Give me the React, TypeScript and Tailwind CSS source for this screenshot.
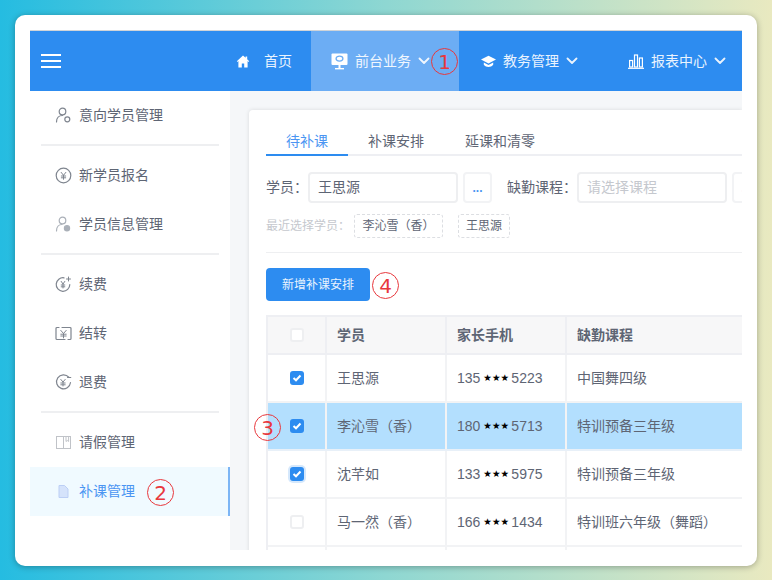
import React from "react";

const font = { fontFamily: '"Liberation Sans","Noto Sans CJK SC",sans-serif' };

function Chevron() {
  return (
    <svg width="12" height="8" viewBox="0 0 12 8" fill="none" stroke="#fff" strokeWidth="1.8" strokeLinecap="round" strokeLinejoin="round" className="shrink-0 opacity-90">
      <path d="M1.500 1.500 6 6l4.500-4.500" />
    </svg>
  );
}

function HomeIcon() {
  return (
    <svg width="14" height="13" viewBox="0 0 14 13" fill="#fff">
      <path d="M7 .5 .8 6.200l.7.7L2.400 6v6.400h3.400V8.600h2.400v3.800h3.400V6l.9.9.7-.7-2-1.900V1.400h-1.600v1.400z" />
    </svg>
  );
}

function DeskIcon() {
  return (
    <svg width="17" height="17" viewBox="0 0 17 17">
      <rect x="0.500" y="0.500" width="16" height="11.500" rx="1" fill="#fff" />
      <ellipse cx="8.500" cy="5.600" rx="3.400" ry="2.500" fill="none" stroke="#6cadf4" strokeWidth="1.300" />
      <rect x="7.500" y="12" width="2" height="3" fill="#fff" />
      <rect x="4" y="15" width="9" height="1.400" fill="#fff" />
    </svg>
  );
}

function CapIcon() {
  return (
    <svg width="15" height="13" viewBox="0 0 15 13" fill="#fff">
      <path d="M7.500.8 0 4.600l7.500 3.800L15 4.600z" />
      <path d="M2.800 7.600v2.200c1.200 1.400 3 2.200 4.700 2.200s3.500-.8 4.700-2.200V7.600L7.500 10z" />
    </svg>
  );
}

function BarsIcon() {
  return (
    <svg width="16" height="15" viewBox="0 0 16 15" fill="none" stroke="#fff" strokeWidth="1.200">
      <rect x="1.600" y="6.500" width="3" height="6.500" />
      <rect x="6.500" y="1" width="3" height="12" />
      <rect x="11.400" y="4" width="3" height="9" />
      <path d="M0 14.300h16" />
    </svg>
  );
}

const g = { fill: "none", stroke: "#7f858f", strokeWidth: 1.2, strokeLinecap: "round" as const };

function SideIcon({ n }: { n: number }) {
  return (
    <svg width="17" height="17" viewBox="0 0 17 17" className="shrink-0">
      {n === 0 && (
        <g {...g}>
          <circle cx="7.500" cy="4.500" r="3.300" />
          <path d="M1.500 15c0-4 2.500-6.500 6-6.500" />
          <circle cx="12.300" cy="12.300" r="2.500" />
        </g>
      )}
      {n === 1 && (
        <g {...g}>
          <circle cx="8.500" cy="8.500" r="7.300" />
          <path d="M6.200 5.400 8.500 8.300l2.300-2.900M6.300 9h4.400M6.300 10.800h4.400M8.500 8.300v4" strokeWidth="1" />
        </g>
      )}
      {n === 2 && (
        <g {...g} stroke="#aab0b8">
          <circle cx="7.500" cy="4.500" r="3.300" />
          <path d="M1.500 15c0-4 2.500-6.500 5.500-6.500" />
          <circle cx="12" cy="12.300" r="2.600" fill="#aab0b8" />
        </g>
      )}
      {n === 3 && (
        <g {...g}>
          <path d="M14.800 8.500a6.800 6.800 0 1 1-5.800-6.700" />
          <path d="M13.500 1v4M11.500 3h4" strokeWidth="1" />
          <path d="M6.200 5.400 8 8l1.800-2.600M6.200 9h3.600M6.200 10.800h3.600M8 8v4" strokeWidth="1" />
        </g>
      )}
      {n === 4 && (
        <g {...g}>
          <path d="M4 2.500H2a1 1 0 0 0-1 1v10a1 1 0 0 0 1 1h8M13 14.500h2a1 1 0 0 0 1-1v-10a1 1 0 0 0-1-1H7" />
          <path d="M5.800 5.400 8.500 8.500l2.700-3.100M5.800 9.200h5.400M5.800 11h5.400M8.500 8.500v4.400" strokeWidth="1" />
        </g>
      )}
      {n === 5 && (
        <g {...g}>
          <path d="M13.800 3.200a7 7 0 1 0 1.700 5.300" />
          <path d="M12.500 3.500h3.300" strokeWidth="1" />
          <path d="M5.800 5.400 8 8l2.200-2.600M5.800 9h4.400M5.800 10.800h4.400M8 8v4" strokeWidth="1" />
        </g>
      )}
      {n === 6 && (
        <g fill="none" stroke="#c0c3c8" strokeWidth="1">
          <rect x="1.500" y="2.500" width="14" height="12" />
          <path d="M8.500 2.500v12M11 2.500v5l1.300-1 1.300 1v-5" />
        </g>
      )}
      {n === 7 && (
        <path d="M4 2.500h5.500L13 6v8.500H4z" fill="#d5e3fb" stroke="#bccff5" strokeWidth="1" />
      )}
    </svg>
  );
}

function SideItem({ n, text, active }: { n: number; text: string; active?: boolean }) {
  return (
    <div className={active ? "flex h-[49px] items-center gap-[7px] border-r-2 border-[#7cb5f5] bg-[#f0faff] pl-[25px] text-[14px] text-[#4b95f2]" : "flex h-[49px] items-center gap-[7px] pl-[25px] text-[14px] text-[#5e6574]"}>
      <SideIcon n={n} />
      <span>{text}</span>
    </div>
  );
}

function SideDivider() {
  return <div className="mx-[11px] mt-[4px] mb-[5px] h-[2px] bg-[#eeeff1]" />;
}

function NavItem({ icon, text, active, inset }: { icon: React.ReactNode; text: string; active?: boolean; inset: string }) {
  return (
    <div className={active ? "flex h-full w-[148px] shrink-0 items-center bg-[#6cadf4] pl-[20px] text-[14px] text-white/90" : "flex h-full w-[148px] shrink-0 items-center pl-[20px] text-[14px] text-white/90"}>
      <span className={"flex w-[24px] shrink-0 items-center " + inset}>{icon}</span>
      <span>{text}</span>
      <span className="ml-[7px] flex"><Chevron /></span>
    </div>
  );
}

function Check({ on, glow }: { on?: boolean; glow?: boolean }) {
  if (!on) return <span className="block h-[14px] w-[14px] rounded-[3px] border-2 border-[#eeeff1] bg-white" />;
  return (
    <span className={glow ? "flex h-[14px] w-[14px] items-center justify-center rounded-[3px] bg-[#2d8cf0] shadow-[0_0_0_2px_rgba(45,140,240,0.2)]" : "flex h-[14px] w-[14px] items-center justify-center rounded-[3px] bg-[#2d8cf0]"}>
      <svg width="10" height="8" viewBox="0 0 10 8" fill="none" stroke="#fff" strokeWidth="2"><path d="M1.500 4 4 6.300 8.500 1.500" /></svg>
    </span>
  );
}

function Phone({ a, b }: { a: string; b: string }) {
  return (
    <span className="flex items-center">
      <span>{a}</span>
      <span className="mx-[3px] w-[25px] whitespace-nowrap text-center text-[9.500px] leading-none text-black" style={{ fontFamily: '"DejaVu Sans",sans-serif' }}>★★★</span>
      <span>{b}</span>
    </span>
  );
}

const rows = [
  { name: "王思源", a: "135", b: "5223", course: "中国舞四级", on: true },
  { name: "李沁雪（香）", a: "180", b: "5713", course: "特训预备三年级", on: true, sel: true },
  { name: "沈芊如", a: "133", b: "5975", course: "特训预备三年级", on: true, glow: true },
  { name: "马一然（香）", a: "166", b: "1434", course: "特训班六年级（舞蹈）" },
];

function Row({ r }: { r: (typeof rows)[number] }) {
  const cell = "flex items-center border-r-2 border-[#f2f3f5] pl-[10px]";
  return (
    <div className={r.sel ? "grid h-[48px] grid-cols-[59px_120px_120px_300px] border-b-2 border-[#e8f0f8] bg-[#b3dffe] text-[14px] text-[#5e6574]" : "grid h-[48px] grid-cols-[59px_120px_120px_300px] border-b-2 border-[#f2f3f5] text-[14px] text-[#5e6574]"}>
      <div className="flex items-center justify-center border-r-2 border-[#f2f3f5]"><Check on={r.on} glow={r.glow} /></div>
      <div className={cell}>{r.name}</div>
      <div className={cell}><Phone a={r.a} b={r.b} /></div>
      <div className="flex items-center pl-[10px]">{r.course}</div>
    </div>
  );
}

function Mark({ n, className }: { n: string; className: string }) {
  return (
    <span className={"absolute flex h-[27px] w-[27px] items-center justify-center rounded-full border-[1.700px] border-[#e8383d] text-[20px] leading-none text-[#e8383d] " + className} style={{ fontFamily: '"DejaVu Sans",sans-serif' }}>{n}</span>
  );
}

export default function App() {
  return (
    <div className="relative h-[580px] w-[772px] overflow-hidden bg-[linear-gradient(to_right,#25bce1_0%,#8ed7d2_50%,#e9e9c0_100%)] px-[15px] pt-[15px]" style={font}>
      <div className="h-[551px] rounded-[10px] bg-white px-[15px] pt-[15px] shadow-[0_1px_6px_rgba(0,0,0,0.3)]">
        <div className="flex h-[520px] flex-col overflow-hidden border-t border-[#d0d4d8]">
          <header className="flex h-[60px] shrink-0 items-center bg-[#2d8cf0]">
            <div className="flex w-[186px] shrink-0 pl-[11px]">
              <svg width="20" height="14" viewBox="0 0 20 14" fill="#fff"><rect y="0" width="20" height="2" /><rect y="6" width="20" height="2" /><rect y="12" width="20" height="2" /></svg>
            </div>
            <div className="flex h-full w-[95px] shrink-0 items-center pl-[20px] text-[14px] text-white/90">
              <span className="flex w-[28px]"><HomeIcon /></span>
              <span>首页</span>
            </div>
            <NavItem active inset="" icon={<DeskIcon />} text="前台业务" />
            <NavItem inset="pl-[2px]" icon={<CapIcon />} text="教务管理" />
            <NavItem inset="pl-[1px]" icon={<BarsIcon />} text="报表中心" />
          </header>
          <div className="flex min-h-0 flex-1">
            <aside className="w-[200px] shrink-0 bg-white">
              <SideItem n={0} text="意向学员管理" />
              <SideDivider />
              <SideItem n={1} text="新学员报名" />
              <SideItem n={2} text="学员信息管理" />
              <SideDivider />
              <SideItem n={3} text="续费" />
              <SideItem n={4} text="结转" />
              <SideItem n={5} text="退费" />
              <SideDivider />
              <SideItem n={6} text="请假管理" />
              <SideItem n={7} text="补课管理" active />
            </aside>
            <main className="min-w-0 flex-1 overflow-hidden bg-[#f5f7f9] pl-[19px] pt-[19px]">
              <div className="h-[500px] overflow-hidden rounded-l-[4px] bg-white pl-[17px] pt-[16px] shadow-[0_0_4px_rgba(0,0,0,0.12)]">
                <div className="flex h-[30px] border-b-2 border-[#eeeff3] text-[14px] leading-[31px] text-[#5e6574]">
                  <div className="-mb-[2px] h-[30px] w-[82px] shrink-0 border-b-2 border-[#2d8cf0] pl-[20px] text-[#4b95f2]">待补课</div>
                  <div className="w-[97px] shrink-0 pl-[20px]">补课安排</div>
                  <div className="pl-[20px]">延课和清零</div>
                </div>
                <div className="mt-[16px] flex h-[31px] items-center whitespace-nowrap text-[14px] text-[#5e6574]">
                  <span className="w-[42px] shrink-0">学员：</span>
                  <div className="flex h-[31px] w-[150px] shrink-0 items-center rounded-[4px] border-2 border-[#eeeff1] pl-[8px]">王思源</div>
                  <div className="ml-[5px] flex h-[31px] w-[29px] shrink-0 items-center justify-center rounded-[4px] border-2 border-[#f2f3f5] text-[12px] font-bold leading-none text-[#4b95f2]">...</div>
                  <span className="ml-[15px] w-[70px] shrink-0">缺勤课程：</span>
                  <div className="flex h-[31px] w-[150px] shrink-0 items-center rounded-[4px] border-2 border-[#eeeff1] pl-[8px] text-[#c5c8ce]">请选择课程</div>
                  <div className="ml-[5px] flex h-[31px] w-[29px] shrink-0 items-center justify-center rounded-[4px] border-2 border-[#f2f3f5] text-[12px] font-bold leading-none text-[#4b95f2]">...</div>
                </div>
                <div className="mt-[10px] flex h-[25px] items-center whitespace-nowrap text-[12px] text-[#c5c8ce]">
                  <span className="w-[88px] shrink-0">最近选择学员：</span>
                  <span className="flex h-[24px] w-[89px] shrink-0 items-center justify-center rounded-[3px] border border-dashed border-[#dcdee2] text-[#5e6574]">李沁雪（香）</span>
                  <span className="ml-[15px] flex h-[24px] w-[52px] shrink-0 items-center justify-center rounded-[3px] border border-dashed border-[#dcdee2] text-[#5e6574]">王思源</span>
                </div>
                <div className="mt-[14px] h-[1px] bg-[#eeeff1]" />
                <button className="mt-[15px] flex h-[33px] w-[104px] items-center justify-center rounded-[4px] bg-[#2d8cf0] text-[12px] text-white/90">新增补课安排</button>
                <div className="mt-[14px] w-[602px] border-l-2 border-t-2 border-[#eeeff3]">
                  <div className="grid h-[38px] grid-cols-[59px_120px_120px_300px] border-b-2 border-[#eeeff3] bg-[#f7f7f8] text-[14px] font-semibold text-[#5e6574]">
                    <div className="flex items-center justify-center border-r-2 border-[#eeeff3]"><Check /></div>
                    <div className="flex items-center border-r-2 border-[#eeeff3] pl-[10px]">学员</div>
                    <div className="flex items-center border-r-2 border-[#eeeff3] pl-[10px]">家长手机</div>
                    <div className="flex items-center pl-[10px]">缺勤课程</div>
                  </div>
                  {rows.map((r) => <Row key={r.name} r={r} />)}
                  <div className="grid h-[48px] grid-cols-[59px_120px_120px_300px]">
                    <div className="border-r-2 border-[#f2f3f5]" />
                    <div className="border-r-2 border-[#f2f3f5]" />
                    <div className="border-r-2 border-[#f2f3f5]" />
                    <div />
                  </div>
                </div>
              </div>
            </main>
          </div>
        </div>
      </div>
      <Mark n="1" className="left-[431px] top-[48px]" />
      <Mark n="2" className="left-[147px] top-[479px]" />
      <Mark n="3" className="left-[254px] top-[414px]" />
      <Mark n="4" className="left-[372px] top-[272px]" />
    </div>
  );
}
